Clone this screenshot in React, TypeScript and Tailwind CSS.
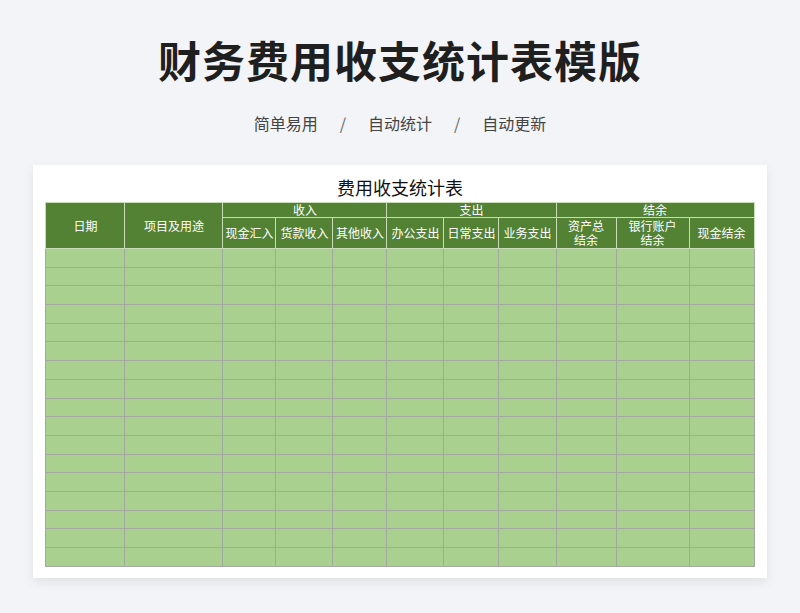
const cols = [79, 98, 53, 57, 54, 57, 55, 57, 60, 73, 65];
const rows = Array.from({ length: 17 });

export default function App() {
  const th = "border border-[#c9dcb8] text-white font-normal text-[12px] leading-[14px] p-0";
  return (
    <div className="w-[800px] h-[613px] bg-[#f3f4f7] flex flex-col items-center" style={{ fontFamily: '"Noto Sans CJK SC", sans-serif' }}>
      <h1 className="mt-[29px] text-[43px] leading-[60px] font-bold text-[#1f1f1f] tracking-[1px]">财务费用收支统计表模版</h1>
      <div className="mt-[22px] flex gap-[22px] text-[16px] leading-[24px] text-[#444]">
        <span>简单易用</span><span className="text-[#666]">/</span><span>自动统计</span><span className="text-[#666]">/</span><span>自动更新</span>
      </div>
      <div className="mt-[30px] w-[734px] h-[413px] bg-white shadow-[0_4px_10px_rgba(0,0,0,0.08)] flex flex-col items-center">
        <div className="mt-[9px] h-[28px] text-[18px] leading-[26px] text-[#111]">费用收支统计表</div>
        <table className="border-collapse table-fixed w-[708px] bg-[#a9d08e]">
          <colgroup>{cols.map((w, i) => <col key={i} style={{ width: w }} />)}</colgroup>
          <thead className="bg-[#548235]">
            <tr className="h-[14px]">
              <th rowSpan={2} className={th}>日期</th>
              <th rowSpan={2} className={th}>项目及用途</th>
              <th colSpan={3} className={th}>收入</th>
              <th colSpan={3} className={th}>支出</th>
              <th colSpan={3} className={th}>结余</th>
            </tr>
            <tr className="h-[31px]">
              {["现金汇入", "货款收入", "其他收入", "办公支出", "日常支出", "业务支出"].map((t) => (
                <th key={t} className={th}>{t}</th>
              ))}
              <th className={th}><div>资产总</div><div>结余</div></th>
              <th className={th}><div>银行账户</div><div>结余</div></th>
              <th className={th}>现金结余</th>
            </tr>
          </thead>
          <tbody>
            {rows.map((_, r) => (
              <tr key={r} className="h-[18.7px]">
                {cols.map((_, c) => <td key={c} className="border border-[#a3a9a0] p-0" />)}
              </tr>
            ))}
          </tbody>
        </table>
      </div>
    </div>
  );
}
